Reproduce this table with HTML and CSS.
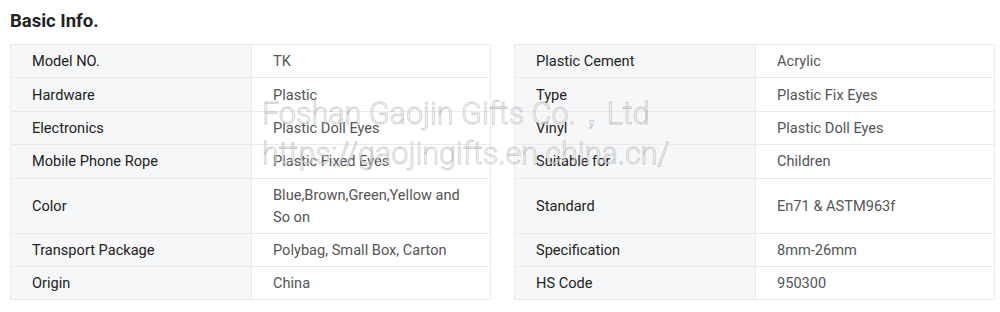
FILE: index.html
```html
<!DOCTYPE html>
<html>
<head>
<meta charset="utf-8">
<link rel="stylesheet" href="styles.css">
</head>
<body>
<div class="page">
  <h2 class="title">Basic Info.</h2>
  <div class="tables">
    <table class="info">
      <tr><td class="k">Model NO.</td><td class="v">TK</td></tr>
      <tr><td class="k">Hardware</td><td class="v">Plastic</td></tr>
      <tr><td class="k">Electronics</td><td class="v">Plastic Doll Eyes</td></tr>
      <tr><td class="k">Mobile Phone Rope</td><td class="v">Plastic Fixed Eyes</td></tr>
      <tr class="tall"><td class="k">Color</td><td class="v">Blue,Brown,Green,Yellow and So on</td></tr>
      <tr><td class="k">Transport Package</td><td class="v">Polybag, Small Box, Carton</td></tr>
      <tr><td class="k">Origin</td><td class="v">China</td></tr>
    </table>
    <table class="info">
      <tr><td class="k">Plastic Cement</td><td class="v">Acrylic</td></tr>
      <tr><td class="k">Type</td><td class="v">Plastic Fix Eyes</td></tr>
      <tr><td class="k">Vinyl</td><td class="v">Plastic Doll Eyes</td></tr>
      <tr><td class="k">Suitable for</td><td class="v">Children</td></tr>
      <tr class="tall"><td class="k">Standard</td><td class="v">En71 &amp; ASTM963f</td></tr>
      <tr><td class="k">Specification</td><td class="v">8mm-26mm</td></tr>
      <tr><td class="k">HS Code</td><td class="v">950300</td></tr>
    </table>
  </div>
  <div class="watermark">
    <div>Foshan Gaojin Gifts Co.，Ltd</div>
    <div>https://gaojingifts.en.china.cn/</div>
  </div>
</div>
</body>
</html>
```

FILE: styles.css
```css
html, body {
  margin: 0;
  padding: 0;
  background: #fff;
}
.page {
  position: relative;
  padding: 10px 5px 0 10px;
  font-family: Roboto, "Liberation Sans", Arial, sans-serif;
}
.title {
  margin: 0;
  font-size: 18.5px;
  font-weight: 700;
  color: #222;
  line-height: 22px;
  height: 34px;
}
.tables {
  display: flex;
  gap: 23px;
}
.info {
  width: 481px;
  border-collapse: collapse;
  table-layout: fixed;
  font-size: 14.6px;
  line-height: 22px;
}
.info td {
  border: 1px solid #e8eaed;
  height: 33.4px;
  box-sizing: border-box;
  padding: 5px 10px 5px 21px;
  vertical-align: middle;
}
.info tr.tall td {
  height: 55px;
}
.info td.k {
  width: 241px;
  background: #f6f7f9;
  color: #222;
}
.info td.v {
  background: #fff;
  color: #555;
}
.watermark {
  position: absolute;
  left: 262px;
  top: 94px;
  font-size: 30.5px;
  font-weight: 300;
  line-height: 40px;
  color: rgba(255, 255, 255, 0.55);
  -webkit-text-stroke: 0.8px rgba(150, 150, 150, 0.5);
  pointer-events: none;
  white-space: nowrap;
}
```
